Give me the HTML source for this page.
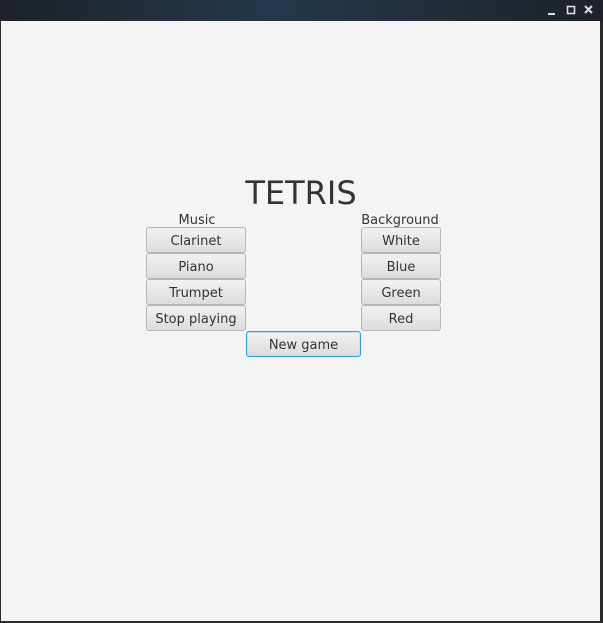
<html><head><style>
body{margin:0;width:603px;height:623px;background:#2a2a2a;position:relative;overflow:hidden;font-family:"DejaVu Sans","Liberation Sans",sans-serif;}
.tb{position:absolute;left:0;top:0;width:603px;height:21px;background:linear-gradient(90deg,#1e2228,#23384c 45%,#1e2228);}
.c{position:absolute;left:1px;top:21px;width:599px;height:600px;background:#f4f4f4;}
.b{position:absolute;height:24px;border:1px solid #b5b5b5;border-radius:3px;background:linear-gradient(#f2f2f2,#dcdcdc);font-size:13px;color:#333;text-align:center;line-height:28px;box-sizing:content-box;}
.l{position:absolute;font-size:13px;color:#333;text-align:center;}
</style></head><body>
<div class="tb">
<svg width="603" height="21" style="position:absolute;left:0;top:0">
<rect x="548" y="13" width="7" height="2" fill="#ddd"/>
<rect x="567.5" y="6.5" width="7" height="7" fill="none" stroke="#ddd" stroke-width="1.6"/>
<path d="M585 6 L592 13 M592 6 L585 13" stroke="#ddd" stroke-width="2"/>
</svg></div>
<div class="c"></div>
<div class="l" style="left:201px;width:200px;top:174px;font-size:32px;line-height:38px">TETRIS</div>
<div class="l" style="left:147px;width:100px;top:213px;line-height:16px">Music</div>
<div class="l" style="left:350px;width:100px;top:213px;line-height:16px">Background</div>
<div class="b" style="left:146px;top:227px;width:98px">Clarinet</div>
<div class="b" style="left:146px;top:253px;width:98px">Piano</div>
<div class="b" style="left:146px;top:279px;width:98px">Trumpet</div>
<div class="b" style="left:146px;top:305px;width:98px">Stop playing</div>
<div class="b" style="left:361px;top:227px;width:78px">White</div>
<div class="b" style="left:361px;top:253px;width:78px">Blue</div>
<div class="b" style="left:361px;top:279px;width:78px">Green</div>
<div class="b" style="left:361px;top:305px;width:78px">Red</div>
<div class="b" style="left:246px;top:331px;width:113px;border-color:#2aa4d8;box-shadow:inset 0 0 0 1px #bfe3f3">New game</div>
</body></html>
